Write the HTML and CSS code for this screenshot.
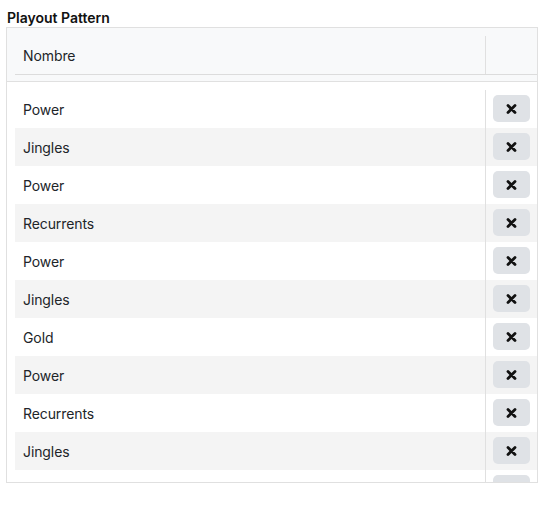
FILE: index.html
```html
<!DOCTYPE html>
<html lang="es">
<head>
    <meta charset="UTF-8">
    <meta name="viewport" content="width=device-width, initial-scale=1.0">
    <title>Playout Pattern</title>
    <link rel="stylesheet" href="styles.css">
</head>
<body>
    <div class="title">Playout Pattern</div>
    <div class="panel">
        <div class="panel-head">
            <div class="row head-row">
                <div class="cell name">Nombre</div>
                <div class="cell action"></div>
            </div>
        </div>
        <div class="panel-body" id="rows"></div>
    </div>

    <script>
        // lista de elementos del patron
        const items = ['Power', 'Jingles', 'Power', 'Recurrents', 'Power', 'Jingles',
                       'Gold', 'Power', 'Recurrents', 'Jingles', 'Power'];

        const icon = '<svg width="11" height="10" viewBox="0 0 11 10"><path d="M2 1.5 L9 8.5 M9 1.5 L2 8.5" stroke="#111" stroke-width="2.8" stroke-linecap="round"/></svg>';

        const rows = document.getElementById('rows');
        items.forEach(function(name, i) {
            const row = document.createElement('div');
            row.className = 'row' + (i % 2 === 1 ? ' striped' : '');
            row.innerHTML = '<div class="cell name">' + name + '</div>' +
                '<div class="cell action"><button class="btn-remove">' + icon + '</button></div>';
            rows.appendChild(row);
        });
    </script>
</body>
</html>
```

FILE: styles.css
```css
body {
    margin: 0;
    padding: 8px 0 0 6px;
    font-family: Inter, "Noto Sans", Arial, sans-serif;
    color: #212529;
    background: white;
}
.title {
    font-size: 14px;
    font-weight: 600;
    line-height: 19px;
    padding-left: 1px;
    color: #111;
}
.panel {
    width: 530px;
    height: 454px;
    border: 1px solid #e0e0e0;
    display: flex;
    flex-direction: column;
    overflow: hidden;
}
.panel-head {
    background: #f8f9fa;
    padding: 8px 0 6px 8px;
    border-bottom: 1px solid #e0e0e0;
}
.panel-body {
    padding: 8px 0 0 8px;
    overflow: hidden;
    flex: 1;
}
.row {
    display: grid;
    grid-template-columns: 471px 51px;
    height: 38px;
}
.head-row {
    border-bottom: 1px solid #dcdcdc;
}
.striped {
    background: #f4f4f4;
}
.cell {
    display: flex;
    align-items: center;
}
.name {
    padding-left: 8px;
    font-size: 14px;
    letter-spacing: -0.1px;
    border-right: 1px solid #e0e0e0;
}
.action {
    justify-content: center;
}
.btn-remove {
    width: 37px;
    height: 27px;
    border: none;
    border-radius: 5px;
    background: #dfe2e6;
    padding: 0;
    display: flex;
    align-items: center;
    justify-content: center;
    cursor: pointer;
    margin-top: -1px;
}
```
